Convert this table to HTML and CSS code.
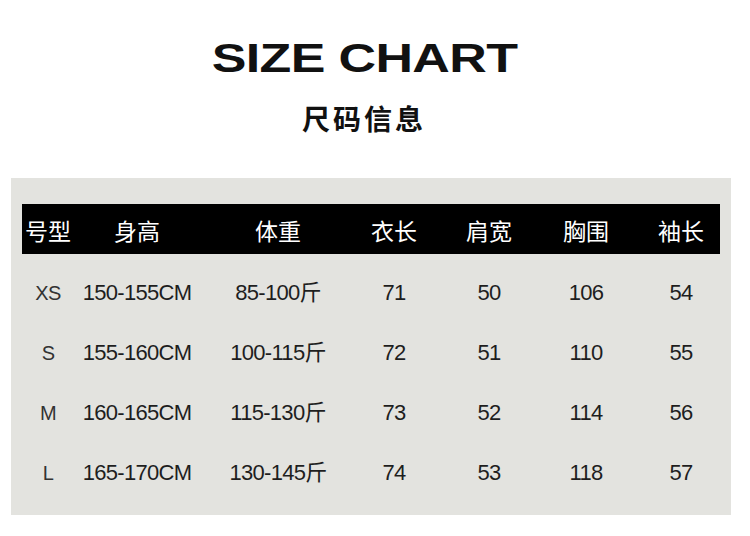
FILE: index.html
```html
<!DOCTYPE html>
<html lang="zh-CN">
<head>
<meta charset="utf-8">
<title>Size Chart</title>
<link rel="stylesheet" href="styles.css">
</head>
<body>
<header class="heading">
  <div class="title"><span class="title-text">SIZE CHART</span></div>
  <div class="subtitle">尺码信息</div>
</header>
<section class="panel">
  <div class="row head">
    <div class="cell">号型</div>
    <div class="cell">身高</div>
    <div class="cell">体重</div>
    <div class="cell">衣长</div>
    <div class="cell">肩宽</div>
    <div class="cell">胸围</div>
    <div class="cell last">袖长</div>
  </div>
  <div class="row data">
    <div class="cell size">XS</div>
    <div class="cell">150-155CM</div>
    <div class="cell">85-100斤</div>
    <div class="cell">71</div>
    <div class="cell">50</div>
    <div class="cell">106</div>
    <div class="cell last">54</div>
  </div>
  <div class="row data">
    <div class="cell size">S</div>
    <div class="cell">155-160CM</div>
    <div class="cell">100-115斤</div>
    <div class="cell">72</div>
    <div class="cell">51</div>
    <div class="cell">110</div>
    <div class="cell last">55</div>
  </div>
  <div class="row data">
    <div class="cell size">M</div>
    <div class="cell">160-165CM</div>
    <div class="cell">115-130斤</div>
    <div class="cell">73</div>
    <div class="cell">52</div>
    <div class="cell">114</div>
    <div class="cell last">56</div>
  </div>
  <div class="row data">
    <div class="cell size">L</div>
    <div class="cell">165-170CM</div>
    <div class="cell">130-145斤</div>
    <div class="cell">74</div>
    <div class="cell">53</div>
    <div class="cell">118</div>
    <div class="cell last">57</div>
  </div>
</section>
</body>
</html>
```

FILE: styles.css
```css
html, body {
  margin: 0;
  padding: 0;
  background: #ffffff;
}

body {
  width: 750px;
  height: 536px;
  overflow: hidden;
}

.heading {
  padding-top: 38px;
  padding-right: 22px;
  text-align: center;
  color: #111111;
}

.title {
  height: 40px;
  line-height: 40px;
  font-family: "Liberation Sans", "DejaVu Sans", sans-serif;
  font-weight: bold;
  font-size: 40px;
}

.title-text {
  display: inline-block;
  letter-spacing: -0.5px;
  transform: scaleX(1.3);
}

.subtitle {
  margin-top: 26px;
  height: 28px;
  line-height: 28px;
  font-family: "Noto Sans CJK SC", sans-serif;
  font-weight: bold;
  font-size: 28px;
  letter-spacing: 3px;
}

.panel {
  margin-top: 46px;
  margin-left: 11px;
  width: 720px;
  height: 337px;
  box-sizing: border-box;
  padding: 26px 11px 0;
  background: #e3e3df;
}

.row {
  display: grid;
  grid-template-columns: 52px 126px 156px 76px 114px 80px 1fr;
}

.cell {
  text-align: center;
  white-space: nowrap;
}

.cell.last {
  padding-left: 16px;
}

.head {
  height: 50px;
  box-sizing: border-box;
  padding-top: 2px;
  background: #000000;
  color: #ffffff;
  font-family: "Noto Sans CJK SC", sans-serif;
  font-weight: 400;
  font-size: 23px;
  line-height: 48px;
}

.head + .data {
  margin-top: 9px;
}

.data {
  height: 60px;
  line-height: 60px;
  font-family: "Liberation Sans", "Noto Sans CJK SC", sans-serif;
  font-size: 22px;
  letter-spacing: -0.7px;
  color: #1e1e1e;
}

.data .size {
  font-size: 20px;
  color: #333333;
}
```
